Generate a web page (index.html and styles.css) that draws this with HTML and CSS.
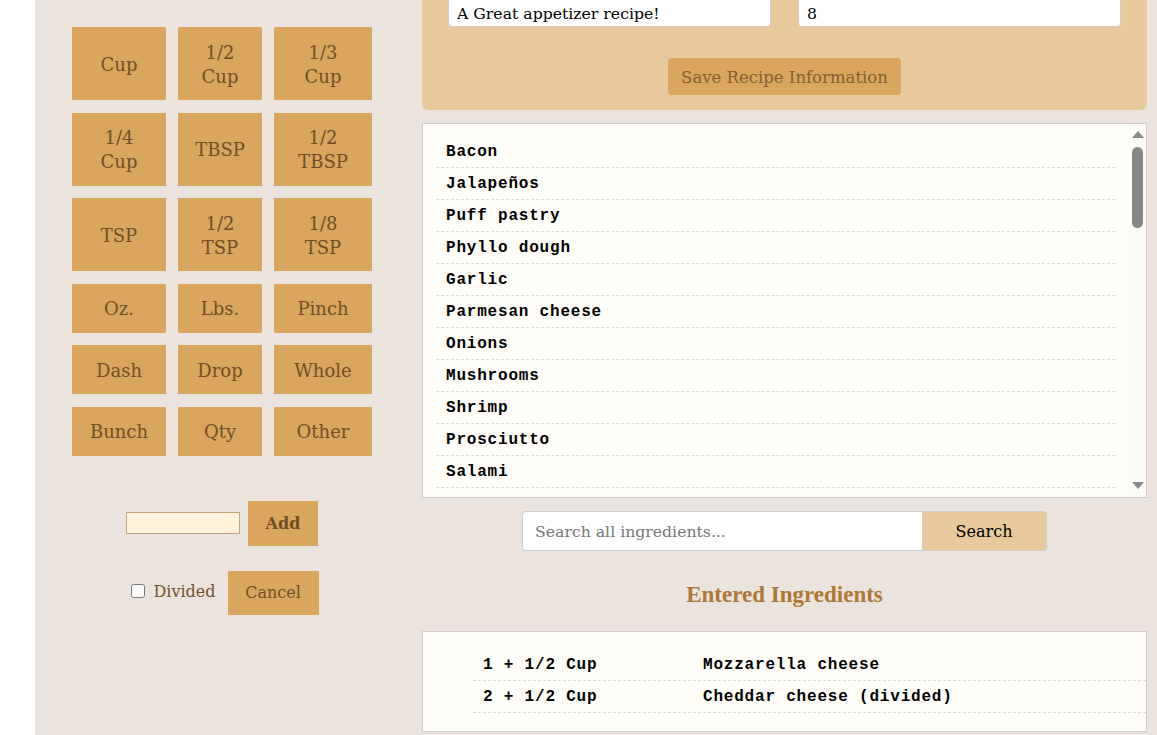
FILE: index.html
```html
<!DOCTYPE html>
<html>
<head>
<meta charset="utf-8">
<link rel="stylesheet" href="styles.css">
</head>
<body>
<div class="page">
  <aside class="left">
    <div class="units">
      <button class="unit">Cup</button>
      <button class="unit">1/2<br>Cup</button>
      <button class="unit">1/3<br>Cup</button>
      <button class="unit">1/4<br>Cup</button>
      <button class="unit">TBSP</button>
      <button class="unit">1/2<br>TBSP</button>
      <button class="unit">TSP</button>
      <button class="unit">1/2<br>TSP</button>
      <button class="unit">1/8<br>TSP</button>
      <button class="unit">Oz.</button>
      <button class="unit">Lbs.</button>
      <button class="unit">Pinch</button>
      <button class="unit">Dash</button>
      <button class="unit">Drop</button>
      <button class="unit">Whole</button>
      <button class="unit">Bunch</button>
      <button class="unit">Qty</button>
      <button class="unit">Other</button>
    </div>
    <div class="add-row">
      <input class="qty-input" type="text">
      <button class="act add">Add</button>
    </div>
    <div class="cancel-row">
      <label class="divided"><input type="checkbox"> Divided</label>
      <button class="act cancel">Cancel</button>
    </div>
  </aside>
  <main class="right">
    <section class="info">
      <div class="info-fields">
        <input class="field" type="text" value="A Great appetizer recipe!">
        <input class="field" type="text" value="8">
      </div>
      <button class="save">Save Recipe Information</button>
    </section>
    <section class="listbox">
      <ul class="ing-list">
        <li>Bacon</li>
        <li>Jalapeños</li>
        <li>Puff pastry</li>
        <li>Phyllo dough</li>
        <li>Garlic</li>
        <li>Parmesan cheese</li>
        <li>Onions</li>
        <li>Mushrooms</li>
        <li>Shrimp</li>
        <li>Prosciutto</li>
        <li>Salami</li>
      </ul>
      <div class="scrollbar">
        <span class="arrow up"></span>
        <div class="track"><span class="thumb"></span></div>
        <span class="arrow down"></span>
      </div>
    </section>
    <form class="search">
      <input class="search-input" type="text" placeholder="Search all ingredients...">
      <button class="search-btn" type="button">Search</button>
    </form>
    <h2 class="entered-title">Entered Ingredients</h2>
    <section class="entered">
      <div class="entered-row"><span class="q">1 + 1/2 Cup</span><span class="n">Mozzarella cheese</span></div>
      <div class="entered-row"><span class="q">2 + 1/2 Cup</span><span class="n">Cheddar cheese (divided)</span></div>
    </section>
  </main>
</div>
</body>
</html>
```
FILE: styles.css
```css
* { box-sizing: border-box; }
html, body { margin: 0; padding: 0; background: #ffffff; overflow: hidden; }
body { font-family: "DejaVu Serif", serif; }

.page {
  display: flex;
  margin-left: 35px;
  background: #ebe3de;
  min-height: 735px;
}

.left {
  width: 387px;
  flex: none;
  padding: 27px 0 0 37px;
}

.units {
  display: grid;
  grid-template-columns: 94px 84px 98px;
  grid-template-rows: 73px 73px 73px 49px 49px 49px;
  column-gap: 12px;
  row-gap: 12.6px;
  width: 300px;
}
.unit {
  border: none;
  margin: 0;
  padding: 2px 0 0;
  background: #d9a55f;
  color: #724e26;
  font-family: "DejaVu Serif", serif;
  font-size: 18px;
  line-height: 24px;
}

.add-row {
  width: 300px;
  margin-top: 45px;
  display: flex;
  justify-content: center;
  align-items: center;
  gap: 8px;
}
.qty-input {
  width: 114px;
  height: 22px;
  background: #fff3dc;
  border: 1px solid #c4a57a;
  margin: 0;
  padding: 0;
}
.act {
  border: none;
  background: #d9a55f;
  color: #724e26;
  font-family: "DejaVu Serif", serif;
  font-size: 16px;
  margin: 0;
  padding: 0;
}
.add { width: 70px; height: 45px; font-weight: bold; }
.cancel { width: 91px; height: 44px; }

.cancel-row {
  width: 300px;
  margin-top: 25px;
  display: flex;
  justify-content: center;
  align-items: center;
  gap: 12px;
  padding-left: 6px;
}
.divided {
  display: flex;
  align-items: center;
  gap: 8px;
  color: #77512a;
  font-size: 16px;
  margin-top: -3px;
}
.divided input { margin: 0; width: 14px; height: 14px; }

.right {
  width: 725px;
  flex: none;
}

.info {
  margin-top: -23px;
  background: #e7c99c;
  border-radius: 0 0 6px 6px;
  padding: 10px 26px 15px;
  display: flex;
  flex-direction: column;
  align-items: center;
}
.info-fields {
  display: flex;
  gap: 27px;
  width: 100%;
}
.field {
  width: 323px;
  height: 40px;
  border: 1px solid #cfcfcf;
  border-radius: 4px;
  background: #fff;
  margin: 0;
  padding: 13px 8px 0;
  font-family: "DejaVu Serif", serif;
  font-size: 15.7px;
  color: #000;
}
.save {
  margin-top: 31px;
  width: 233px;
  height: 37px;
  border: none;
  border-radius: 4px;
  background: #d9a55f;
  color: #84602f;
  font-family: "DejaVu Serif", serif;
  font-size: 16.5px;
  padding: 2px 0 0;
}

.listbox {
  margin-top: 13px;
  height: 375px;
  border: 1px solid #cfcccb;
  background: #fffdf8;
  display: flex;
  overflow: hidden;
}
.ing-list {
  list-style: none;
  margin: 0 0 0 13px;
  padding: 12px 0 0;
  width: 679px;
  flex: none;
}
.ing-list li {
  height: 32px;
  line-height: 31px;
  padding-top: 1px;
  border-bottom: 1px dashed #dcdcdc;
  padding-left: 10px;
  font-family: "Liberation Mono", monospace;
  font-weight: bold;
  font-size: 16px;
  letter-spacing: 0.8px;
  color: #000;
}
.scrollbar {
  margin-left: auto;
  width: 17px;
  background: #fbfbfa;
  display: flex;
  flex-direction: column;
  align-items: center;
}
.arrow {
  width: 0;
  height: 0;
  border-left: 6px solid transparent;
  border-right: 6px solid transparent;
}
.arrow.up { border-bottom: 7px solid #8a8a8a; margin-top: 7px; }
.arrow.down { border-top: 7px solid #8a8a8a; margin-bottom: 8px; }
.track { flex: 1; width: 100%; display: flex; justify-content: center; padding-top: 9px; }
.thumb { width: 11px; height: 81px; border-radius: 6px; background: #878787; }

.search {
  margin: 13px 0 0;
  display: flex;
  justify-content: center;
}
.search-input {
  width: 400px;
  height: 40px;
  margin: 0;
  border: 1px solid #cfcfcf;
  border-right: none;
  border-radius: 4px 0 0 4px;
  background: #fff;
  padding: 0 12px;
  font-family: "DejaVu Serif", serif;
  font-size: 15.7px;
  color: #000;
}
.search-input::placeholder { color: #767676; }
.search-btn {
  width: 125px;
  height: 40px;
  margin: 0;
  border: 1px solid #cfcfcf;
  border-left: none;
  border-radius: 0 4px 4px 0;
  background: #e7c99c;
  font-family: "DejaVu Serif", serif;
  font-size: 16px;
  color: #000;
}

.entered-title {
  margin: 31px 0 23px;
  text-align: center;
  font-family: "Liberation Serif", serif;
  font-weight: bold;
  font-size: 23px;
  line-height: 26px;
  color: #ad7834;
}

.entered {
  border: 1px solid #cfcccb;
  background: #fffdf8;
  padding: 17px 0 18px 50px;
}
.entered-row {
  display: flex;
  height: 32px;
  line-height: 31px;
  padding-top: 1px;
  border-bottom: 1px dashed #dcdcdc;
  padding-left: 10px;
  font-family: "Liberation Mono", monospace;
  font-weight: bold;
  font-size: 16px;
  letter-spacing: 0.8px;
  color: #000;
}
.entered-row .q { width: 220px; flex: none; }
```
